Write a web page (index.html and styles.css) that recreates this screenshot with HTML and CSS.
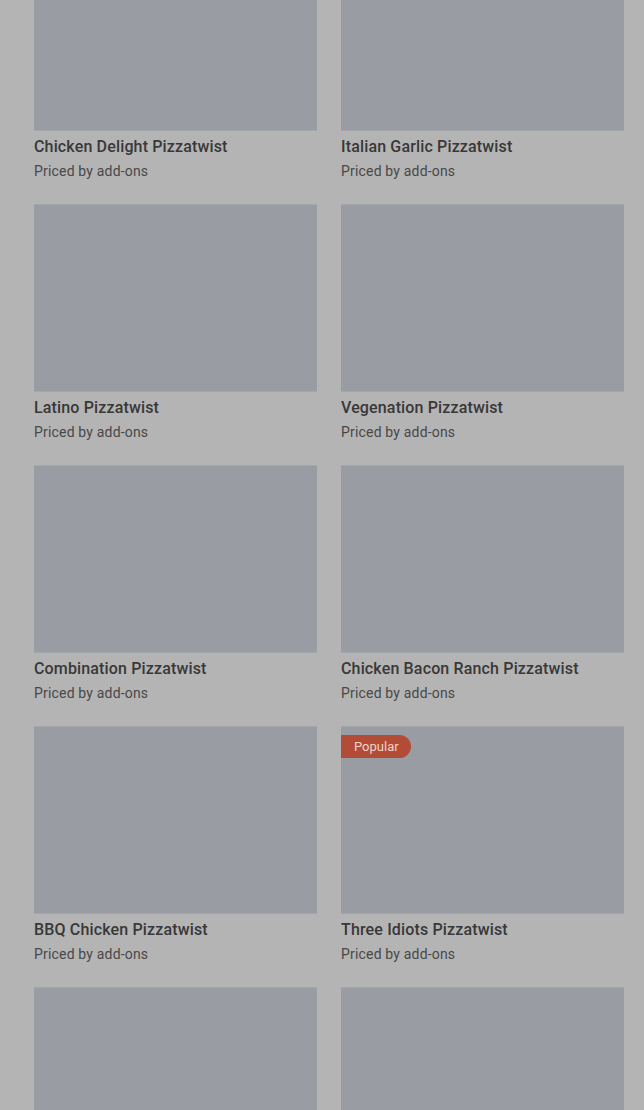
FILE: index.html
```html
<!DOCTYPE html>
<html lang="en">
<head>
  <meta charset="UTF-8">
  <title>Pizzatwists</title>
  <link rel="stylesheet" href="styles.css">
</head>
<body>
  <div class="menu">
    <div class="item">
      <div class="thumb"></div>
      <div class="name">Chicken Delight Pizzatwist</div>
      <div class="price">Priced by add-ons</div>
    </div>
    <div class="item">
      <div class="thumb"></div>
      <div class="name">Italian Garlic Pizzatwist</div>
      <div class="price">Priced by add-ons</div>
    </div>
    <div class="item">
      <div class="thumb"></div>
      <div class="name">Latino Pizzatwist</div>
      <div class="price">Priced by add-ons</div>
    </div>
    <div class="item">
      <div class="thumb"></div>
      <div class="name">Vegenation Pizzatwist</div>
      <div class="price">Priced by add-ons</div>
    </div>
    <div class="item">
      <div class="thumb"></div>
      <div class="name">Combination Pizzatwist</div>
      <div class="price">Priced by add-ons</div>
    </div>
    <div class="item">
      <div class="thumb"></div>
      <div class="name">Chicken Bacon Ranch Pizzatwist</div>
      <div class="price">Priced by add-ons</div>
    </div>
    <div class="item">
      <div class="thumb"></div>
      <div class="name">BBQ Chicken Pizzatwist</div>
      <div class="price">Priced by add-ons</div>
    </div>
    <div class="item">
      <div class="thumb">
        <span class="badge">Popular</span>
      </div>
      <div class="name">Three Idiots Pizzatwist</div>
      <div class="price">Priced by add-ons</div>
    </div>
    <div class="item">
      <div class="thumb"></div>
    </div>
    <div class="item">
      <div class="thumb"></div>
    </div>
  </div>
</body>
</html>
```

FILE: styles.css
```css
body {
  margin: 0;
  background: #b4b4b4;
  font-family: 'Roboto', 'Inter', sans-serif;
  overflow: hidden;
}
.menu {
  display: grid;
  grid-template-columns: 283px 283px;
  column-gap: 24px;
  row-gap: 23px;
  margin-top: -57px;
  padding-left: 34px;
}
.thumb {
  position: relative;
  height: 188px;
  background: #9a9ca3;
  border-top: 1px solid #a4a6ad;
  border-bottom: 1px solid #a4a6ad;
  box-sizing: border-box;
}
.name {
  margin-top: 6px;
  font-size: 16px;
  line-height: 20px;
  font-weight: 500;
  letter-spacing: 0.15px;
  color: #383838;
}
.price {
  margin-top: 4px;
  font-size: 14px;
  line-height: 20px;
  letter-spacing: 0.18px;
  color: #484848;
}
.badge {
  position: absolute;
  top: 8px;
  left: 0;
  height: 23px;
  line-height: 23px;
  padding: 0 12px 0 13px;
  font-size: 13px;
  color: #efd3c9;
  background: #b24c37;
  border-radius: 0 12px 12px 0;
}
```
